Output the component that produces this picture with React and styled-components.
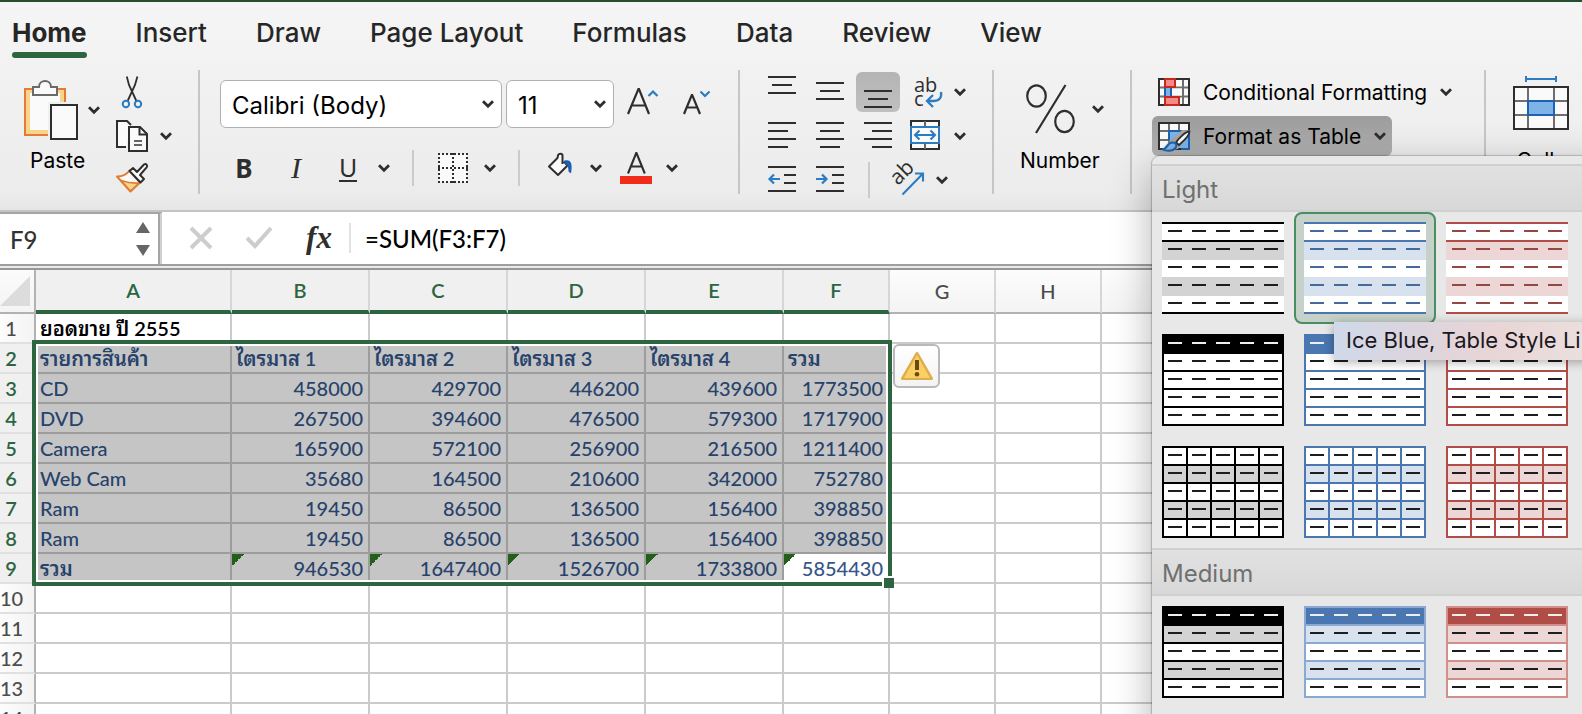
import React from "react";
import styled, { createGlobalStyle, css } from "styled-components";

const UI = `Inter, "Noto Sans", sans-serif`;
const SHEET = `Lato, "Noto Sans Thai Looped", Loma, Waree, "Noto Sans Thai", "Noto Sans", sans-serif`;
const INK = "#2e2e2e";
const BLUE = "#2b7cc1";
const GREEN = "#2d6541";

const GlobalStyle = createGlobalStyle`
  *, *::before, *::after { box-sizing: border-box; }
  body { margin: 0; background: #fff; font-family: ${UI}; overflow: hidden; }
  button, input, select { font: inherit; color: inherit; }
`;

const Page = styled.div`
  display: flex;
  flex-direction: column;
  height: 100vh;
  overflow: hidden;
`;

/* ---------- ribbon ---------- */

const Ribbon = styled.header`
  flex: none;
  position: relative;
  z-index: 2;
  border-top: 2px solid #24502f;
  border-bottom: 2px solid #c4c4c4;
  background: linear-gradient(#f5f5f5, #ececec 92%, #e6e6e6);
`;

const TabBar = styled.nav`
  display: flex;
  gap: 49px;
  padding: 0 12px;
  height: 68px;
`;

const Tab = styled.button`
  display: flex;
  flex-direction: column;
  justify-content: space-between;
  flex: none;
  height: 56px;
  padding: 16px 0 0;
  border: 0;
  background: none;
  font-size: 26px;
  line-height: 30px;
  font-weight: ${(p) => (p.$active ? 700 : 500)};
  color: #262626;
  white-space: nowrap;
  &::after {
    content: "";
    width: 100%;
    height: 6px;
    border-radius: 3px;
    background: ${(p) => (p.$active ? GREEN : "transparent")};
  }
`;

const Groups = styled.div`
  display: flex;
  height: 140px;
  padding-bottom: 16px;
`;

const Group = styled.section`
  flex: none;
  display: flex;
  flex-direction: ${(p) => (p.$row ? "row" : "column")};
  gap: ${(p) => p.$gap || 0}px;
  padding: ${(p) => p.$pad};
  ${(p) => p.$width && css`width: ${p.$width}px;`}
  border-right: 2px solid #c6c6c6;
  &:last-child { border-right: 0; }
`;

const Row = styled.div`
  display: flex;
  flex: none;
  align-items: center;
  height: ${(p) => p.$h}px;
`;

const Stack = styled.div`
  display: flex;
  flex-direction: column;
  padding-top: ${(p) => p.$pt || 0}px;
`;

const IconButton = styled.button`
  display: flex;
  flex: none;
  align-items: center;
  justify-content: center;
  width: ${(p) => p.$w}px;
  height: ${(p) => p.$h || 36}px;
  margin-left: ${(p) => p.$ml || 0}px;
  padding: 0;
  border: 0;
  border-radius: 6px;
  background: ${(p) => (p.$pressed ? "linear-gradient(#b4b4b4, #c0c0c0)" : "none")};
  color: ${INK};
  svg { display: block; flex: none; overflow: visible; }
`;

const LetterButton = styled(IconButton)`
  font-family: ${(p) => p.$family || `"Noto Sans", sans-serif`};
  font-size: ${(p) => p.$size || 26}px;
  font-weight: ${(p) => p.$weight || 400};
  font-style: ${(p) => (p.$italic ? "italic" : "normal")};
  line-height: 28px;
`;

const Underlined = styled.span`
  width: 18px;
  border-bottom: 2px solid ${INK};
  line-height: 26px;
`;

const Separator = styled.span`
  flex: none;
  width: 2px;
  height: 36px;
  margin-left: ${(p) => p.$ml}px;
  background: #cbcbcb;
`;

const BigButton = styled.button`
  display: flex;
  flex-direction: column;
  gap: 9px;
  align-items: ${(p) => (p.$center ? "center" : "flex-start")};
  padding: 0;
  border: 0;
  background: none;
  font-size: 21px;
  line-height: 24px;
  color: #000;
  svg { display: block; overflow: visible; }
`;

const BigIcon = styled.span`
  display: flex;
  align-items: ${(p) => (p.$top ? "flex-start" : "center")};
  gap: ${(p) => p.$gap}px;
  height: ${(p) => p.$h || 60}px;
  padding-left: ${(p) => p.$pl || 0}px;
`;

const BigLabel = styled.span`
  padding-left: ${(p) => p.$pl || 0}px;
`;

const Picker = styled.label`
  position: relative;
  display: flex;
  align-items: center;
  flex: none;
  width: ${(p) => p.$w}px;
  margin-left: ${(p) => p.$ml || 0}px;
  svg { position: absolute; right: 8px; top: 20px; pointer-events: none; }
`;

const PickerSelect = styled.select`
  appearance: none;
  width: 100%;
  height: 48px;
  padding: 2px 28px 0 11px;
  border: 1px solid #b0b0b0;
  border-radius: 6px;
  background: #fff;
  color: #000;
  font-size: 24px;
`;

const StyleButton = styled.button`
  display: flex;
  align-items: center;
  align-self: flex-start;
  gap: 13px;
  height: 40px;
  padding: 0 6px;
  border: 0;
  border-radius: 6px;
  background: ${(p) => (p.$pressed ? "linear-gradient(#9c9c9c, #b2b2b2)" : "none")};
  color: #000;
  font-size: 21px;
  white-space: nowrap;
  svg { display: block; flex: none; overflow: visible; }
`;

const MenuAnchor = styled.div`
  position: relative;
`;

/* ---------- table style gallery ---------- */

const Gallery = styled.div`
  position: absolute;
  z-index: 5;
  top: 100%;
  left: 0;
  width: 460px;
  min-height: 600px;
  padding-top: 8px;
  border-radius: 8px 8px 0 0;
  background: #e8e8e8;
  box-shadow: 0 0 1px 1px rgba(0, 0, 0, 0.2), 0 12px 40px rgba(0, 0, 0, 0.3);
`;

const GalleryHeading = styled.h2`
  margin: 0;
  height: 48px;
  padding: 0 10px;
  border: solid #d0d0d0;
  border-width: 2px 0;
  background: linear-gradient(#e1e1e1, #d8d8d8);
  color: #707070;
  font-size: 24px;
  font-weight: 400;
  line-height: 48px;
`;

const GalleryGrid = styled.div`
  display: grid;
  grid-template-columns: repeat(3, 142px);
`;

const GalleryItem = styled.div`
  position: relative;
`;

const GalleryButton = styled.button`
  display: block;
  padding: 8px;
  border: 2px solid ${(p) => (p.$hot ? "#4b8d63" : "transparent")};
  border-radius: 8px;
  background: ${(p) => (p.$hot ? "#c6d2c9" : "none")};
  svg { display: block; }
`;

const Tip = styled.div`
  position: absolute;
  z-index: 2;
  top: 110px;
  left: 40px;
  width: 270px;
  padding: 0 12px 2px;
  background: linear-gradient(100deg, #cfdaea, #d9d5e0 24%, #e9d5d6 60%, #eadfdd 90%);
  box-shadow: 0 2px 10px rgba(0, 0, 0, 0.32);
  color: #1b1720;
  font-size: 22px;
  line-height: 36px;
  white-space: nowrap;
`;

/* ---------- formula bar ---------- */

const FormulaBar = styled.div`
  flex: none;
  display: flex;
  align-items: stretch;
  height: 58px;
  border-bottom: 2px solid #989898;
  background: linear-gradient(#fff 52px, #9f9f9f 52px, #9f9f9f 54px, #eaeaea 54px);
`;

const NameBox = styled.div`
  display: flex;
  align-items: center;
  justify-content: space-between;
  width: 162px;
  height: 52px;
  padding: 0 10px;
  border-top: 2px solid #a5a5a5;
  border-right: 2px solid #d0d0d0;
  box-shadow: inset -2px 0 #a5a5a5;
  svg { display: block; }
`;

const TextBox = styled.input`
  border: 0;
  outline: 0;
  padding: 0;
  background: none;
  font-family: ${SHEET};
  font-size: 24px;
  font-weight: 500;
  color: ${(p) => p.$ink || "#000"};
  min-width: 0;
  ${(p) => (p.$w ? css`width: ${p.$w}px;` : css`flex: 1;`)}
`;

const FormulaTools = styled.div`
  display: flex;
  align-items: center;
  flex: 1;
  height: 52px;
  padding-left: 27px;
`;

const FormulaDivider = styled.span`
  width: 2px;
  height: 30px;
  margin: 0 14px;
  background: #e2e2e2;
`;

/* ---------- sheet ---------- */

const SheetArea = styled.main`
  position: relative;
  flex: 1;
  min-height: 0;
`;

const Grid = styled.table`
  width: 100%;
  table-layout: fixed;
  border-collapse: separate;
  border-spacing: 0;
  font-family: ${SHEET};
  font-size: 20px;
  line-height: 24px;
`;

const Corner = styled.th`
  padding: 0;
  border-right: 2px solid #b2b2b2;
  border-bottom: 2px solid #b2b2b2;
  background: linear-gradient(#fbfbfb, #f4f4f4);
  svg { display: block; }
`;

const ColHead = styled.th`
  height: 44px;
  padding: 0;
  border-right: 2px solid #d6d6d6;
  border-bottom: ${(p) => (p.$on ? `4px solid ${GREEN}` : "2px solid #b2b2b2")};
  background: ${(p) => (p.$on ? "#f0f0f0" : "linear-gradient(#fcfcfc, #f4f4f4)")};
  color: ${(p) => (p.$on ? GREEN : "#4c4c4c")};
  font-weight: ${(p) => (p.$on ? 600 : 500)};
`;

const RowHead = styled.th`
  height: 30px;
  padding: 0 12px 0 0;
  border-right: 2px solid #b2b2b2;
  border-bottom: 2px solid #e0e0e0;
  background: ${(p) => (p.$on ? "#f0f0f0" : "linear-gradient(90deg, #fcfcfc, #f4f4f4)")};
  color: ${(p) => (p.$on ? GREEN : "#4c4c4c")};
  font-weight: ${(p) => (p.$on ? 600 : 500)};
`;

const Cell = styled.td`
  height: 30px;
  padding: 0 5px 0 4px;
  border-right: 2px solid #cbcbcb;
  border-bottom: 2px solid #cbcbcb;
  text-align: ${(p) => (p.$num ? "right" : "left")};
  white-space: nowrap;
  color: #000;
  font-weight: ${(p) => (p.$strong ? 600 : 500)};
  ${(p) =>
    p.$on &&
    css`
      border-color: #9d9d9d;
      background-color: #c5c5c5;
      color: #27426b;
    `}
  ${(p) =>
    p.$current &&
    css`
      background-color: #fff;
      color: #345789;
    `}
  ${(p) =>
    p.$flag &&
    css`
      background-image: linear-gradient(135deg, #22601a 50%, transparent 50%);
      background-size: 12px 12px;
      background-repeat: no-repeat;
    `}
`;

const Selection = styled.div`
  position: absolute;
  top: 70px;
  left: 32px;
  width: 860px;
  height: 246px;
  border: 4px solid ${GREEN};
  box-shadow: inset 0 0 0 2px #fff;
  pointer-events: none;
`;

const FillHandle = styled.span`
  position: absolute;
  right: -6px;
  bottom: -6px;
  width: 10px;
  height: 10px;
  background: ${GREEN};
  box-shadow: -2px -2px 0 #fff;
`;

const WarnButton = styled.button`
  position: absolute;
  top: 0;
  left: 857px;
  display: flex;
  align-items: center;
  justify-content: center;
  width: 47px;
  height: 44px;
  padding: 0;
  border: 2px solid #b9b9b9;
  border-radius: 6px;
  background: linear-gradient(#fff, #f3f3f3);
  pointer-events: auto;
`;

/* ---------- icons ---------- */

const Chevron = () => (
  <svg width="12" height="8" viewBox="0 0 12 8" fill="none" stroke={INK} strokeWidth="2.8" aria-hidden="true">
    <path d="M1 1.2 6 6.2 11 1.2" />
  </svg>
);

const ClipboardIcon = () => (
  <svg width="54" height="60" viewBox="0 0 54 60" fill="none" aria-hidden="true">
    <rect x="1" y="9" width="40" height="46" fill="#f7d58b" stroke="#e07c34" strokeWidth="2" />
    <rect x="6" y="13" width="30" height="37" fill="#fafafa" />
    <path d="M24 22h20v38H24z" fill="#f0f0f0" />
    <path d="M9 15V7h6c0-8 12-8 12 0h6v8z" fill="#fafafa" stroke="#6a6a6a" strokeWidth="2" />
    <rect x="27" y="25" width="26" height="34" fill="#fafafa" stroke={INK} strokeWidth="2" />
  </svg>
);

const ScissorsIcon = () => (
  <svg width="20" height="32" viewBox="0 0 20 32" fill="none" strokeWidth="1.8" aria-hidden="true">
    <path d="M4.8.6 7 9l7.4 16M15.4.6 13 9 5.6 25" stroke={INK} />
    <circle cx="3.9" cy="28" r="3.2" stroke={BLUE} strokeWidth="2" />
    <circle cx="16" cy="28" r="3.2" stroke={BLUE} strokeWidth="2" />
  </svg>
);

const CopyIcon = () => (
  <svg width="32" height="32" viewBox="0 0 32 32" fill="none" stroke={INK} strokeWidth="2" aria-hidden="true">
    <path d="M10 27H1V1h10l4 4" fill="#fafafa" />
    <path d="M13 7h11l7 7v17H13z" fill="#fafafa" />
    <path d="M23.500 7v7.500H31" />
    <path d="M18 21h8M18 25h8" stroke="#666" />
  </svg>
);

const BrushIcon = () => (
  <svg width="32" height="30" viewBox="0 0 32 30" fill="none" strokeWidth="2" strokeLinejoin="round" aria-hidden="true">
    <path d="M1 13.500c5 0 9-1 12.500-6L24 19.500 14.500 28.500z" fill="#fafafa" stroke="#e07c34" />
    <path d="M5 17.500c6 2 12 3 18 2.500l-8.500 8z" fill="#f7d58b" stroke="#e07c34" strokeWidth="1.600" />
    <path d="M13.500 8 17 5l4 4 7-7.500c2-1.500 4 1 2.600 2.800L24 12l4 4-3.500 3.500z" fill="#fafafa" stroke={INK} />
  </svg>
);

const SizeIcon = ({ up }) => (
  <svg width="30" height="30" viewBox="0 0 30 30" fill="none" aria-hidden="true">
    {up ? (
      <path d="M0 25 10.400 0h.6L21 25M4 16.500h13" stroke={INK} strokeWidth="2.200" />
    ) : (
      <path d="M2 25 9.800 6.200h.4L18 25M4.800 18.500h10.400" stroke={INK} strokeWidth="2.200" />
    )}
    <path d={up ? "M20.500 7 25 2.500 29.500 7" : "M18.500 2.500 23 7 27.500 2.500"} stroke={BLUE} strokeWidth="2.200" />
  </svg>
);

const BordersIcon = () => (
  <svg width="30" height="30" viewBox="0 0 30 30" fill="none" stroke={INK} strokeWidth="2" strokeDasharray="2 2" aria-hidden="true">
    <rect x="1" y="1" width="28" height="28" fill="#fafafa" stroke="none" />
    <path d="M0 1h30M0 29h30M1 0v30M29 0v30M0 15h30M15 0v30" />
  </svg>
);

const BucketIcon = () => (
  <svg width="28" height="32" viewBox="0 0 28 32" fill="none" strokeWidth="2" strokeLinejoin="round" aria-hidden="true">
    <path d="M10.500 7 3 14.500l9 8.500 9.500-9.500-5-3V2.500l-3-.5z" fill="#fafafa" />
    <path d="M16.500 12V3.500c0-2.500-4-2.500-4.500 0L11.500 6 3 14.500l9 8.500 9.500-9.500-3.500-4" stroke={INK} />
    <path d="M18.500 8.500c6-1.500 8.500 2 6.500 13l-2.500-2c0-4-.5-5.500-4-8z" fill="#1c5fae" />
  </svg>
);

const FontColorIcon = () => (
  <svg width="32" height="32" viewBox="0 0 32 32" fill="none" aria-hidden="true">
    <path d="M8 21.500 16.200 1h.3L24.800 21.500M11 14.500h10.700" stroke={INK} strokeWidth="2.100" />
    <path d="M0 24h32v8H0z" fill="#f02d1b" />
  </svg>
);

const LINE_SETS = {
  top: [[0, 0, 28], [4, 8, 20], [0, 16, 28]],
  middle: [[0, 6, 28], [4, 14, 20], [0, 22, 28]],
  bottom: [[0, 14, 28], [4, 22, 20], [0, 30, 28]],
  left: [[0, 2, 28], [0, 10, 20], [0, 18, 28], [0, 26, 20]],
  center: [[0, 2, 28], [4, 10, 20], [0, 18, 28], [4, 26, 20]],
  right: [[0, 2, 28], [8, 10, 20], [0, 18, 28], [8, 26, 20]],
  indent: [[0, 2, 28], [16, 10, 12], [16, 18, 12], [0, 26, 28]],
};

const LinesIcon = ({ set, arrow }) => (
  <svg width="28" height="32" viewBox="0 0 28 32" aria-hidden="true">
    {LINE_SETS[set].map(([x, y, w]) => (
      <rect key={y} x={x} y={y} width={w} height="2" fill={INK} />
    ))}
    {arrow && (
      <path
        d={arrow === "left" ? "M12 15H1.500M6 10.500 1.500 15 6 19.500" : "M0 15h10.500M6 10.500 10.500 15 6 19.500"}
        fill="none"
        stroke={BLUE}
        strokeWidth="2.200"
      />
    )}
  </svg>
);

const WrapIcon = () => (
  <svg width="30" height="32" viewBox="0 0 30 32" aria-hidden="true">
    <g fontFamily="Open Sans, sans-serif" fontSize="20" fill={INK}>
      <text x="4" y="16">ab</text>
      <text x="4" y="30">c</text>
    </g>
    <path d="M31 16c1 6-2 9-8 9h-5M23 19l-6 6 6 6" fill="none" stroke={BLUE} strokeWidth="2.300" />
  </svg>
);

const MergeIcon = () => (
  <svg width="30" height="32" viewBox="0 0 30 32" fill="none" aria-hidden="true">
    <rect x="1" y="1" width="28" height="28" fill="#fafafa" stroke={INK} strokeWidth="2" />
    <path d="M15 1v28" stroke="#666" strokeWidth="2" />
    <rect x="1" y="7" width="28" height="16" fill="#fafafa" stroke={BLUE} strokeWidth="2" />
    <path d="M5 15h20M9.500 10.500 5 15l4.500 4.500M20.500 10.500 25 15l-4.500 4.500" stroke={BLUE} strokeWidth="2.100" />
  </svg>
);

const OrientationIcon = () => (
  <svg width="34" height="32" viewBox="0 0 34 32" aria-hidden="true">
    <text x="0" y="0" transform="translate(8 22) rotate(-45)" fontFamily="Open Sans, sans-serif" fontSize="21" fill={INK}>
      ab
    </text>
    <path d="M12.500 30.500 33 9.500M25 9.500h8v8" fill="none" stroke={BLUE} strokeWidth="2.100" />
  </svg>
);

const PercentIcon = () => (
  <svg width="50" height="50" viewBox="0 0 50 50" fill="none" stroke={INK} strokeWidth="2.200" aria-hidden="true">
    <ellipse cx="10.500" cy="12" rx="9.300" ry="10.700" />
    <ellipse cx="38.500" cy="37.500" rx="9.300" ry="10.700" />
    <path d="M39.500 1 10 49" />
  </svg>
);

const ConditionalIcon = () => (
  <svg width="32" height="28" viewBox="0 0 32 28" fill="none" aria-hidden="true">
    <rect x="1" y="1" width="30" height="26" fill="#fafafa" />
    <path d="M1 9.500h30M1 18.500h30M25 1v26" stroke="#6e6e6e" strokeWidth="2" />
    <path d="M14 10.500h10v7H14z" fill="#fafafa" />
    <rect x="1" y="1" width="30" height="26" stroke={INK} strokeWidth="2" />
    <path d="M7 9h6v10H7z" fill="#7db3e6" stroke="#1d62b0" strokeWidth="2" />
    <path d="M7 1h10v8H7zM7 19h14v8H7z" fill="#f48a8a" stroke="#c5281c" strokeWidth="2" />
  </svg>
);

const FormatTableIcon = () => (
  <svg width="32" height="30" viewBox="0 0 32 30" fill="none" aria-hidden="true">
    <rect x="1" y="2" width="30" height="26" fill="#fafafa" />
    <rect x="11" y="10" width="20" height="18" fill="#7db3e6" />
    <path d="M1 10h30M1 19h10M11 2v26M21 2v8" stroke="#6e6e6e" strokeWidth="2" />
    <path d="M31 28H1V2h30v8" stroke={INK} strokeWidth="2" />
    <path d="M11 19v-9h14M31 12v16h-8" stroke="#1d62b0" strokeWidth="2" />
    <path d="M33 9.500 20 28 2 31l8-9 14-13z" fill="#a5a5a5" />
    <path d="M31.500 10.500c-4-.5-12 8.500-13.500 11l3 2.500c3.500-3 10.500-9.500 10.500-13.500z" fill="#fafafa" stroke={INK} strokeWidth="1.800" />
    <path d="M5 28.500c4 0 4-7 9.500-7 3.500 0 5 3 3 5.500-3 3.500-9 3.500-12.500 1.500z" fill="#7db3e6" stroke="#1d62b0" strokeWidth="2" />
  </svg>
);

const CellsIcon = () => (
  <svg width="56" height="54" viewBox="0 0 56 54" fill="none" strokeWidth="2" aria-hidden="true">
    <path d="M12 3h32M13 0v6M43 0v6" stroke={BLUE} />
    <rect x="1" y="11" width="54" height="42" fill="#fafafa" />
    <path d="M1 25h54M1 39h54M15 11v42M41 11v42" stroke="#6e6e6e" />
    <rect x="1" y="11" width="54" height="42" stroke={INK} />
    <rect x="15" y="25" width="26" height="14" fill="#7db3e6" stroke="#1d62b0" />
  </svg>
);

const StepperIcon = () => (
  <svg width="14" height="36" viewBox="0 0 14 36" fill="#666" aria-hidden="true">
    <path d="M7 1l7 11H0zM7 35l7-11H0z" />
  </svg>
);

const CancelIcon = () => (
  <svg width="24" height="24" viewBox="0 0 24 24" stroke="#cdcdcd" strokeWidth="4" aria-hidden="true">
    <path d="M2 2l20 20M22 2 2 22" />
  </svg>
);

const EnterIcon = () => (
  <svg width="28" height="24" viewBox="0 0 28 24" fill="none" stroke="#cdcdcd" strokeWidth="4" aria-hidden="true">
    <path d="M2 12l8 8L26 2" />
  </svg>
);

const WarningIcon = () => (
  <svg width="34" height="30" viewBox="0 0 34 30" aria-hidden="true">
    <path d="M17 2.500 31.500 27.500h-29z" fill="#fbcf63" stroke="#dcae4e" strokeWidth="3" strokeLinejoin="round" />
    <path d="M17 4 30 27H4z" fill="#fbcf63" />
    <path d="M15 9h4v10h-4z" fill="#6b4a12" />
    <circle cx="17" cy="23.200" r="2.300" fill="#6b4a12" />
  </svg>
);

const CornerIcon = () => (
  <svg width="30" height="30" viewBox="0 0 30 30" aria-hidden="true">
    <path d="M30 0v30H0z" fill="#dcdcdc" />
  </svg>
);

/* One preview of a table style: five rows of five short dashes. */
const StylePreview = ({ line, frame, head, band, rows, cols, dash, headDash }) => {
  const inner = [18, 36, 54, 72];
  return (
    <svg width="122" height="92" viewBox="0 0 122 92" aria-hidden="true">
      <rect width="122" height="92" fill="#fff" />
      {band && <path d="M0 20h122v18H0zM0 55h122v19H0z" fill={band} />}
      {head && <rect width="122" height="20" fill={head} />}
      <g fill={line}>
        <rect width="122" height="2" />
        <rect y="90" width="122" height="2" />
        {(rows ? inner : [18]).map((y) => (
          <rect key={y} y={y} width="122" height="2" />
        ))}
        {frame && <path d="M0 0h2v92H0zM120 0h2v92h-2z" />}
        {cols && [24, 48, 72, 96].map((x) => <rect key={x} x={x} width="2" height="92" />)}
      </g>
      {[0, 1, 2, 3, 4].map((r) =>
        [0, 1, 2, 3, 4].map((c) => (
          <rect key={`${r}-${c}`} x={6 + c * 24} y={8 + r * 18} width="14" height="2" fill={r === 0 && headDash ? headDash : dash} />
        ))
      )}
    </svg>
  );
};

/* ---------- data ---------- */

const TONES = [
  { name: "Black", line: "#000", soft: "#000", band: "#d3d3d3", dash: "#1d1d1d" },
  { name: "Blue", line: "#4a76b2", soft: "#8aa9d2", band: "#d8e2ee", dash: "#45699b" },
  { name: "Red", line: "#b04d47", soft: "#d18f8b", band: "#edd7d6", dash: "#934844" },
];

const LIGHT = [
  ...TONES.map((t) => ({ id: `${t.name} lines`, line: t.line, band: t.band, dash: t.dash })),
  ...TONES.map((t) => ({ id: `${t.name} header`, line: t.line, head: t.line, frame: true, rows: true, dash: "#1d1d1d", headDash: "#eee" })),
  ...TONES.map((t) => ({ id: `${t.name} grid`, line: t.line, band: t.band, frame: true, rows: true, cols: true, dash: "#1d1d1d" })),
];

const MEDIUM = TONES.map((t) => ({
  id: `${t.name} medium`,
  line: t.soft,
  head: t.line,
  band: t.band,
  frame: true,
  rows: true,
  dash: "#1d1d1d",
  headDash: "#eee",
}));

const COLUMNS = ["A", "B", "C", "D", "E", "F", "G", "H", ""];
const WIDTHS = [196, 138, 138, 138, 138, 106, 106, 106];

const ROWS = [
  ["ยอดขาย ปี 2555"],
  ["รายการสินค้า", "ไตรมาส 1", "ไตรมาส 2", "ไตรมาส 3", "ไตรมาส 4", "รวม"],
  ["CD", 458000, 429700, 446200, 439600, 1773500],
  ["DVD", 267500, 394600, 476500, 579300, 1717900],
  ["Camera", 165900, 572100, 256900, 216500, 1211400],
  ["Web Cam", 35680, 164500, 210600, 342000, 752780],
  ["Ram", 19450, 86500, 136500, 156400, 398850],
  ["Ram", 19450, 86500, 136500, 156400, 398850],
  ["รวม", 946530, 1647400, 1526700, 1733800, 5854430],
  [],
  [],
  [],
  [],
  [],
];

const TABS = ["Home", "Insert", "Draw", "Page Layout", "Formulas", "Data", "Review", "View"];

/* ---------- parts ---------- */

const Drop = ({ label, ml, h }) => (
  <IconButton $w={12} $h={h} $ml={ml} aria-label={label}>
    <Chevron />
  </IconButton>
);

const ClipboardGroup = () => (
  <Group $row $gap={16} $pad="0 26px 0 24px" aria-label="Clipboard">
    <Stack $pt={10}>
      <BigButton>
        <BigIcon $gap={10}>
          <ClipboardIcon />
          <Chevron />
        </BigIcon>
        <BigLabel $pl={6}>Paste</BigLabel>
      </BigButton>
    </Stack>
    <Stack>
      <Row $h={44}>
        <IconButton $w={32} aria-label="Cut"><ScissorsIcon /></IconButton>
      </Row>
      <Row $h={44}>
        <IconButton $w={32} aria-label="Copy"><CopyIcon /></IconButton>
        <Drop label="Copy options" ml={12} />
      </Row>
      <Row $h={40}>
        <IconButton $w={32} aria-label="Format painter"><BrushIcon /></IconButton>
      </Row>
    </Stack>
  </Group>
);

const FontGroup = () => (
  <Group $gap={22} $pad="10px 26px 0 20px" aria-label="Font">
    <Row $h={48}>
      <Picker $w={282}>
        <PickerSelect aria-label="Font name" defaultValue="body">
          <option value="body">Calibri (Body)</option>
        </PickerSelect>
        <Chevron />
      </Picker>
      <Picker $w={108} $ml={4}>
        <PickerSelect aria-label="Font size" defaultValue="11">
          <option>11</option>
        </PickerSelect>
        <Chevron />
      </Picker>
      <IconButton $w={30} $ml={14} aria-label="Increase font size"><SizeIcon up /></IconButton>
      <IconButton $w={30} $ml={24} aria-label="Decrease font size"><SizeIcon /></IconButton>
    </Row>
    <Row $h={36}>
      <LetterButton $w={32} $ml={8} $weight={700}>B</LetterButton>
      <LetterButton $w={32} $ml={20} $italic $family={`"Liberation Serif", serif`} $size={30}>I</LetterButton>
      <LetterButton $w={32} $ml={20} $size={25}><Underlined>U</Underlined></LetterButton>
      <Drop label="Underline options" ml={14} />
      <Separator $ml={22} />
      <IconButton $w={30} $ml={24} aria-label="Borders"><BordersIcon /></IconButton>
      <Drop label="Border options" ml={16} />
      <Separator $ml={22} />
      <IconButton $w={32} $ml={24} aria-label="Fill color"><BucketIcon /></IconButton>
      <Drop label="Fill options" ml={14} />
      <IconButton $w={32} $ml={18} aria-label="Font color"><FontColorIcon /></IconButton>
      <Drop label="Font color options" ml={14} />
    </Row>
  </Group>
);

const AlignGroup = () => (
  <Group $gap={4} $pad="2px 26px 0 28px" aria-label="Alignment">
    <Row $h={40}>
      <IconButton $w={28} aria-label="Top align"><LinesIcon set="top" /></IconButton>
      <IconButton $w={28} $ml={20} aria-label="Middle align"><LinesIcon set="middle" /></IconButton>
      <IconButton $w={44} $h={40} $ml={12} $pressed aria-label="Bottom align"><LinesIcon set="bottom" /></IconButton>
      <IconButton $w={30} $ml={10} aria-label="Wrap text"><WrapIcon /></IconButton>
      <Drop label="Wrap options" ml={14} />
    </Row>
    <Row $h={40}>
      <IconButton $w={28} aria-label="Align left"><LinesIcon set="left" /></IconButton>
      <IconButton $w={28} $ml={20} aria-label="Center"><LinesIcon set="center" /></IconButton>
      <IconButton $w={44} $ml={12} aria-label="Align right"><LinesIcon set="right" /></IconButton>
      <IconButton $w={30} $ml={10} aria-label="Merge and center"><MergeIcon /></IconButton>
      <Drop label="Merge options" ml={14} />
    </Row>
    <Row $h={40}>
      <IconButton $w={28} aria-label="Decrease indent"><LinesIcon set="indent" arrow="left" /></IconButton>
      <IconButton $w={28} $ml={20} aria-label="Increase indent"><LinesIcon set="indent" arrow="right" /></IconButton>
      <Separator $ml={24} />
      <IconButton $w={34} $ml={20} aria-label="Orientation"><OrientationIcon /></IconButton>
      <Drop label="Orientation options" ml={12} />
    </Row>
  </Group>
);

const TableStyle = ({ look, tip }) => (
  <GalleryItem>
    <GalleryButton $hot={Boolean(tip)} aria-label={look.id}>
      <StylePreview {...look} />
    </GalleryButton>
    {tip && <Tip role="tooltip">{tip}</Tip>}
  </GalleryItem>
);

const StyleGallery = () => (
  <Gallery>
    <GalleryHeading>Light</GalleryHeading>
    <GalleryGrid>
      {LIGHT.map((look, i) => (
        <TableStyle key={look.id} look={look} tip={i === 1 ? "Ice Blue, Table Style Li" : null} />
      ))}
    </GalleryGrid>
    <GalleryHeading>Medium</GalleryHeading>
    <GalleryGrid>
      {MEDIUM.map((look) => (
        <TableStyle key={look.id} look={look} />
      ))}
    </GalleryGrid>
  </Gallery>
);

const Sheet = () => (
  <SheetArea>
    <Grid>
      <colgroup>
        <col width="36" />
        {WIDTHS.map((w, i) => (
          <col key={i} width={w} />
        ))}
        <col />
      </colgroup>
      <thead>
        <tr>
          <Corner aria-label="Select all"><CornerIcon /></Corner>
          {COLUMNS.map((c, i) => (
            <ColHead key={i} $on={i < 6} scope="col">{c}</ColHead>
          ))}
        </tr>
      </thead>
      <tbody>
        {ROWS.map((row, r) => {
          const picked = r >= 1 && r <= 8;
          return (
            <tr key={r}>
              <RowHead $on={picked} scope="row">{r + 1}</RowHead>
              {COLUMNS.map((_, c) => (
                <Cell
                  key={c}
                  $on={picked && c < 6}
                  $num={typeof row[c] === "number"}
                  $strong={r < 2 || (r === 8 && c === 0)}
                  $current={r === 8 && c === 5}
                  $flag={r === 8 && c > 0 && c < 6}
                >
                  {row[c]}
                </Cell>
              ))}
            </tr>
          );
        })}
      </tbody>
    </Grid>
    <Selection>
      <FillHandle />
      <WarnButton aria-label="Error checking"><WarningIcon /></WarnButton>
    </Selection>
  </SheetArea>
);

export default function App() {
  return (
    <Page>
      <GlobalStyle />
      <Ribbon>
        <TabBar>
          {TABS.map((t, i) => (
            <Tab key={t} $active={i === 0}>{t}</Tab>
          ))}
        </TabBar>
        <Groups>
          <ClipboardGroup />
          <FontGroup />
          <AlignGroup />
          <Group $pad="8px 26px 0 26px" $width={138} aria-label="Number">
            <BigButton>
              <BigIcon $gap={16} $pl={6} $h={62}>
                <PercentIcon />
                <Chevron />
              </BigIcon>
              <BigLabel>Number</BigLabel>
            </BigButton>
          </Group>
          <Group $gap={4} $width={354} $pad="2px 0 0 20px" aria-label="Styles">
            <StyleButton>
              <ConditionalIcon />
              Conditional Formatting
              <Chevron />
            </StyleButton>
            <MenuAnchor>
              <StyleButton $pressed aria-expanded="true">
                <FormatTableIcon />
                Format as Table
                <Chevron />
              </StyleButton>
              <StyleGallery />
            </MenuAnchor>
          </Group>
          <Group $pad="6px 0 0 27px" aria-label="Cells">
            <BigButton $center>
              <BigIcon $top $h={64}>
                <CellsIcon />
              </BigIcon>
              <BigLabel>Cells</BigLabel>
            </BigButton>
          </Group>
        </Groups>
      </Ribbon>
      <FormulaBar>
        <NameBox>
          <TextBox aria-label="Name box" defaultValue="F9" $w={80} $ink="#333" />
          <StepperIcon />
        </NameBox>
        <FormulaTools>
          <IconButton $w={24} aria-label="Cancel"><CancelIcon /></IconButton>
          <IconButton $w={28} $ml={32} aria-label="Enter"><EnterIcon /></IconButton>
          <LetterButton $w={32} $ml={30} $italic $weight={700} $family={`"Liberation Serif", serif`} $size={31}>fx</LetterButton>
          <FormulaDivider />
          <TextBox aria-label="Formula" defaultValue="=SUM(F3:F7)" />
        </FormulaTools>
      </FormulaBar>
      <Sheet />
    </Page>
  );
}
